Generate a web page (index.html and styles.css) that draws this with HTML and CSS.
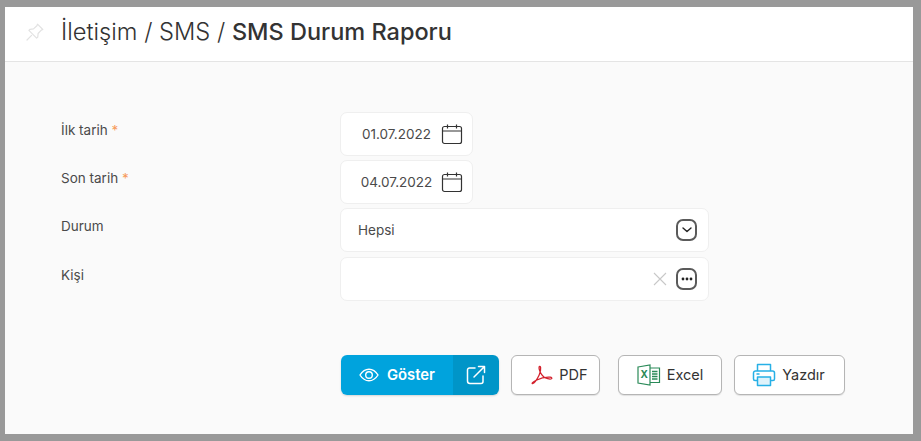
FILE: index.html
```html
<!DOCTYPE html>
<html lang="en">
<head>
    <meta charset="UTF-8">
    <meta name="viewport" content="width=device-width, initial-scale=1.0">
    <title>SMS Durum Raporu</title>
    <link rel="stylesheet" href="styles.css">
</head>
<body>
    <div class="panel">
        <header class="page-head">
            <svg class="pin" width="20" height="20" viewBox="0 0 20 20" fill="none" stroke="#e2e2e2" stroke-width="1.2" stroke-linejoin="round" stroke-linecap="round">
                <path d="M12.5 2.2l5.3 5.3-1.5 .6-3.2 3.4-.3 3.5-1.2 1.1-7.700-7.700 1.200-1.100 3.400-.4 3.400-3.200z"/>
                <path d="M6.600 13.400l-4.600 4.600"/>
            </svg>
            <h1><span class="crumb">İletişim / SMS / </span>SMS Durum Raporu</h1>
        </header>

        <main class="content">
            <form class="report-form">
                <div class="form-row">
                    <label>İlk tarih <span class="req">*</span></label>
                    <div class="field field-date">
                        <span class="value">01.07.2022</span>
                        <svg class="cal" width="22" height="22" viewBox="0 0 22 22" fill="none" stroke="#333" stroke-width="1.200">
                            <rect x="1.500" y="3.500" width="19" height="17" rx="2"/>
                            <path d="M1.500 8h19M6.500 1.500v4M15.500 1.500v4"/>
                        </svg>
                    </div>
                </div>
                <div class="form-row">
                    <label>Son tarih <span class="req">*</span></label>
                    <div class="field field-date">
                        <span class="value">04.07.2022</span>
                        <svg class="cal" width="22" height="22" viewBox="0 0 22 22" fill="none" stroke="#333" stroke-width="1.200">
                            <rect x="1.500" y="3.500" width="19" height="17" rx="2"/>
                            <path d="M1.500 8h19M6.500 1.500v4M15.500 1.500v4"/>
                        </svg>
                    </div>
                </div>
                <div class="form-row">
                    <label>Durum</label>
                    <div class="field field-wide">
                        <span class="value">Hepsi</span>
                        <span class="square-btn">
                            <svg width="10" height="6" viewBox="0 0 10 6" fill="none" stroke="#222" stroke-width="1.400" stroke-linecap="round" stroke-linejoin="round"><path d="M1 1l4 3.600L9 1"/></svg>
                        </span>
                    </div>
                </div>
                <div class="form-row">
                    <label>Kişi</label>
                    <div class="field field-wide">
                        <span class="value"></span>
                        <svg class="clear" width="14" height="14" viewBox="0 0 14 14" stroke="#c8c8c8" stroke-width="1.100"><path d="M1 1l12 12M13 1L1 13"/></svg>
                        <span class="square-btn">
                            <svg width="12" height="4" viewBox="0 0 12 4" fill="#222"><circle cx="2" cy="2" r="1.400"/><circle cx="6" cy="2" r="1.400"/><circle cx="10" cy="2" r="1.400"/></svg>
                        </span>
                    </div>
                </div>
            </form>

            <div class="actions">
                <div class="btn-split">
                    <button type="button" class="btn-show">
                        <svg width="20" height="14" viewBox="0 0 20 14" fill="none" stroke="#fff" stroke-width="1.400"><path d="M1 7c2.400-3.800 5.400-5.800 9-5.800s6.600 2 9 5.800c-2.400 3.800-5.400 5.800-9 5.800S3.400 10.800 1 7z"/><circle cx="10" cy="7" r="3.300"/></svg>
                        Göster
                    </button>
                    <button type="button" class="btn-open" aria-label="Yeni pencere">
                        <svg width="20" height="20" viewBox="0 0 20 20" fill="none" stroke="#fff" stroke-width="1.500" stroke-linecap="round" stroke-linejoin="round"><path d="M9 3H3.500A2 2 0 0 0 1.500 5v11a2.500 2.500 0 0 0 2.500 2.500h11a2 2 0 0 0 2-2V11"/><path d="M12.500 1.500h6v6M18.500 1.500L8 12"/></svg>
                    </button>
                </div>
                <button type="button" class="btn btn-pdf">
                    <svg width="22" height="22" viewBox="0 0 24 22" fill="none" stroke="#d3202c" stroke-width="1.400" stroke-linejoin="round"><path d="M1.500 20.500c2-.6 5-4.600 7.300-9.300 1.300-2.800 2-5.800 1.700-8.300-.2-1.400-1.400-1.600-1.700-.4-.5 2.400 1.800 8 5.200 10.600 2.200 1.700 6.600 2.800 8.300 2 .9-.5.200-1.600-1.300-1.700-3.700-.3-10.700 1-15.300 3.300-2.300 1.200-5.300 3.200-4.200 3.800z"/></svg>
                    PDF
                </button>
                <button type="button" class="btn btn-excel">
                    <svg width="24" height="22" viewBox="0 0 24 22" fill="none" stroke="#2a8a58" stroke-width="1.200"><path d="M1 3l12-2v20L1 19z"/><path d="M13 4h9.500v14.500H13"/><path d="M15 7.500h5.500M15 10h5.500M15 12.500h5.500M15 15h5.500" stroke-width="1.400"/><text class="xl" x="3.600" y="14.300">X</text></svg>
                    Excel
                </button>
                <button type="button" class="btn btn-print">
                    <svg width="24" height="24" viewBox="0 0 24 24" fill="none" stroke="#27b0e6" stroke-width="1.500" stroke-linejoin="round"><path d="M5.500 8V1.500h13V8"/><path d="M5.500 17.500H3A1.500 1.500 0 0 1 1.500 16v-6A2 2 0 0 1 3.500 8h17a2 2 0 0 1 2 2v6a1.500 1.500 0 0 1-1.500 1.500h-2.500"/><path d="M5.500 14h13v8.500h-13z" fill="#dff3fb"/><path d="M7 11h-2" stroke-linecap="round"/></svg>
                    Yazdır
                </button>
            </div>
        </main>
    </div>
</body>
</html>
```

FILE: styles.css
```css
html, body {
    height: 100%;
}
body {
    margin: 0;
    background-color: #999;
    font-family: Inter, 'Noto Sans', sans-serif;
    color: #333;
}
.panel {
    box-sizing: border-box;
    display: flex;
    flex-direction: column;
    height: 427px;
    width: 908px;
    margin: 7px 0 0 5px;
    background-color: #fafafa;
}
.page-head {
    display: flex;
    align-items: center;
    height: 49px;
    padding: 0 0 5px 20px;
    background-color: #fff;
    border-bottom: 1px solid #e4e4e4;
}
.pin {
    margin-right: 16px;
}
h1 {
    margin: 0;
    font-size: 23.500px;
    font-weight: 500;
    color: #333;
}
.crumb {
    font-size: 23.700px;
    font-weight: 300;
}
.content {
    flex: 1;
    padding: 50px 0 0 56px;
}
.report-form {
    display: flex;
    flex-direction: column;
    gap: 4.200px;
}
.form-row {
    display: grid;
    grid-template-columns: 279px 1fr;
}
.form-row label {
    font-size: 13.500px;
    line-height: 17px;
    padding-top: 10px;
    color: #4a4a4a;
}
.req {
    color: #f79a5c;
}
.field {
    box-sizing: border-box;
    display: flex;
    align-items: center;
    height: 44px;
    background-color: #fff;
    border: 1px solid #efefef;
    border-radius: 7px;
    font-size: 13.500px;
}
.field-date {
    width: 133px;
    padding: 0 9px 0 11px;
}
.field-date .value {
    flex: 1;
    text-align: center;
}
.field-wide {
    width: 369px;
    padding: 0 11px 0 17px;
}
.field-wide .value {
    flex: 1;
}
.value {
    color: #4a4a4a;
}
.clear {
    margin-right: 9px;
}
.square-btn {
    box-sizing: border-box;
    display: flex;
    align-items: center;
    justify-content: center;
    width: 21px;
    height: 22px;
    border: 2px solid #5a5a5a;
    border-radius: 7px;
}
.actions {
    display: flex;
    margin: 54.400px 0 0 280px;
}
.actions button {
    font-family: inherit;
    font-size: 14.500px;
    cursor: pointer;
}
.btn-split {
    display: flex;
    width: 158px;
    height: 40px;
    margin-right: 12px;
    border-radius: 6px;
    overflow: hidden;
    box-shadow: 0 1px 2px rgba(0, 0, 0, .15);
}
.actions .btn-show {
    display: flex;
    align-items: center;
    justify-content: center;
    gap: 8px;
    flex: 1;
    border: none;
    background-color: #00a3dd;
    color: #fff;
    font-size: 14.800px;
    font-weight: 600;
}
.btn-open {
    display: flex;
    align-items: center;
    justify-content: center;
    width: 46px;
    border: none;
    background-color: #0095c8;
}
.btn {
    box-sizing: border-box;
    display: flex;
    align-items: center;
    justify-content: center;
    gap: 6px;
    height: 40px;
    padding: 0 6px;
    background-color: #fff;
    border: 1px solid #b5b5b5;
    border-radius: 6px;
    color: #333;
    box-shadow: 0 1px 1px rgba(0, 0, 0, .1);
}
.btn-pdf {
    width: 89px;
    margin-right: 18px;
    padding-left: 14px;
}
.btn-excel {
    width: 104px;
    margin-right: 12px;
}
.btn-print {
    width: 111px;
    padding-right: 8px;
}
.xl {
    font-size: 10px;
    font-weight: 700;
    fill: #2a8a58;
    stroke: none;
}
```
